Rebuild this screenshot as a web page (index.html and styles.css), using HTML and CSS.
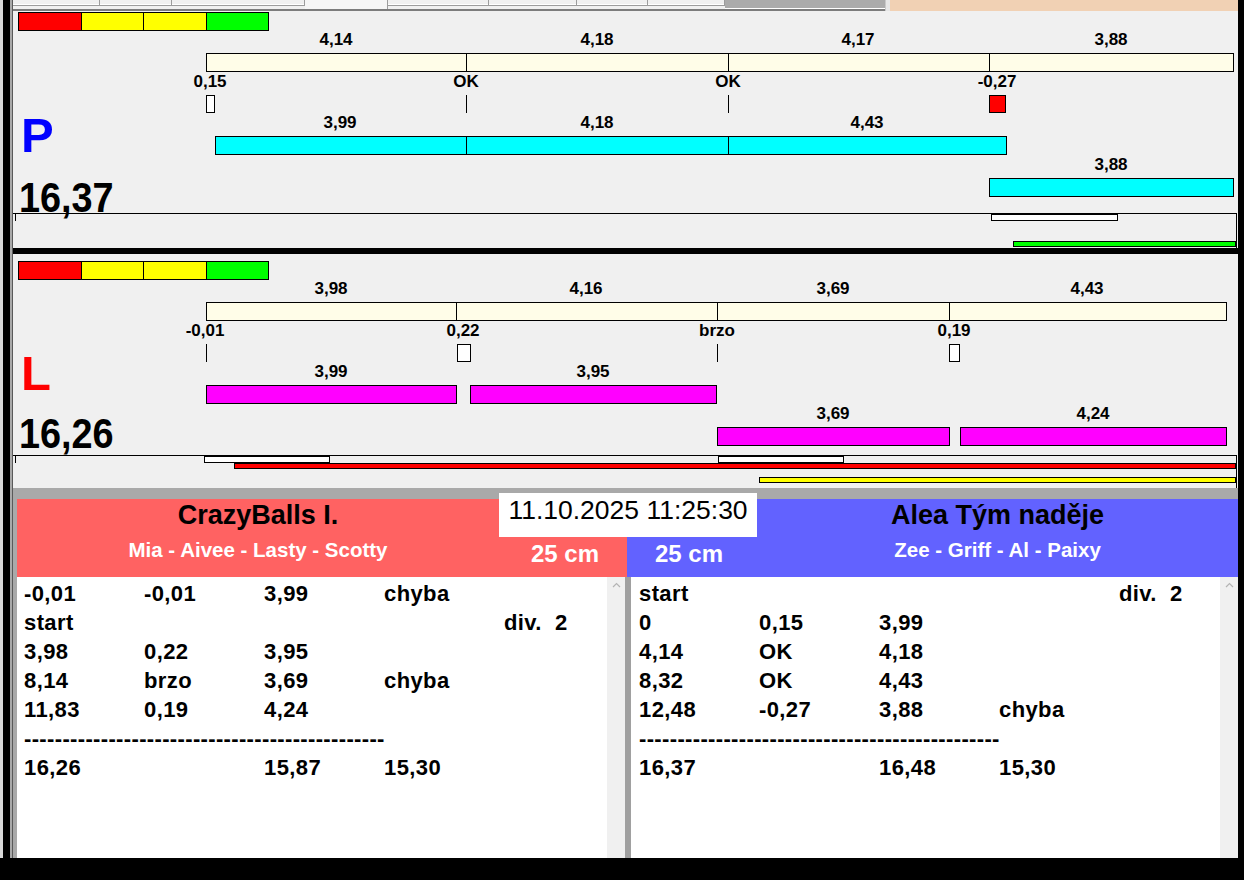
FILE: index.html
```html
<!DOCTYPE html>
<html lang="cs">
<head>
<meta charset="utf-8">
<title>Časomíra</title>
<link rel="stylesheet" href="styles.css">
</head>
<body>
<div class="screen">
  <div class="edge"></div>
  <div class="frame">
    <div class="tabbar">
      <div class="tabs">
        <span class="tab t1"></span><span class="tab t2"></span><span class="tab t3"></span><span class="tab t4 active"></span><span class="tab t5"></span><span class="tab t6"></span><span class="tab t7"></span><span class="tab t8"></span>
        <span class="tab-dark"></span>
      </div>
      <div class="tab-gap"></div>
      <div class="tab-peach"></div>
    </div>

    <section class="panel panel-p">
      <div class="side">
        <div class="scale"><span class="sc sc-red"></span><span class="sc sc-yellow"></span><span class="sc sc-yellow"></span><span class="sc sc-green"></span></div>
        <div class="letter letter-p">P</div>
        <div class="total">16,37</div>
      </div>
      <div class="chart">
        <div class="lane lane-lab">
          <span class="lbl" style="left:130px">4,14</span>
          <span class="lbl" style="left:391px">4,18</span>
          <span class="lbl" style="left:652px">4,17</span>
          <span class="lbl" style="left:905px">3,88</span>
        </div>
        <div class="lane lane-bar">
          <span class="seg plan" style="left:0;width:261px"></span>
          <span class="seg plan" style="left:260px;width:263px"></span>
          <span class="seg plan" style="left:522px;width:262px"></span>
          <span class="seg plan" style="left:783px;width:245px"></span>
        </div>
        <div class="lane lane-lab">
          <span class="lbl" style="left:4px">0,15</span>
          <span class="lbl" style="left:260px">OK</span>
          <span class="lbl" style="left:522px">OK</span>
          <span class="lbl" style="left:791px">-0,27</span>
        </div>
        <div class="lane lane-mark">
          <span class="mk" style="left:0;width:9px"></span>
          <span class="tick" style="left:260px"></span>
          <span class="tick" style="left:522px"></span>
          <span class="mk mk-err" style="left:783px;width:17px"></span>
        </div>
        <div class="lane lane-lab">
          <span class="lbl" style="left:134px">3,99</span>
          <span class="lbl" style="left:391px">4,18</span>
          <span class="lbl" style="left:661px">4,43</span>
        </div>
        <div class="lane lane-bar">
          <span class="seg run-p" style="left:9px;width:252px"></span>
          <span class="seg run-p" style="left:260px;width:263px"></span>
          <span class="seg run-p" style="left:522px;width:279px"></span>
        </div>
        <div class="lane lane-lab">
          <span class="lbl" style="left:905px">3,88</span>
        </div>
        <div class="lane lane-bar">
          <span class="seg run-p" style="left:783px;width:245px"></span>
        </div>
      </div>
      <div class="box">
        <span class="box-tick"></span>
        <span class="pbar pbar-white" style="left:978px;width:127px"></span>
        <span class="pbar pbar-green" style="left:1000px;width:223px"></span>
      </div>
    </section>

    <div class="divider"></div>

    <section class="panel panel-l">
      <div class="side">
        <div class="scale"><span class="sc sc-red"></span><span class="sc sc-yellow"></span><span class="sc sc-yellow"></span><span class="sc sc-green"></span></div>
        <div class="letter letter-l">L</div>
        <div class="total">16,26</div>
      </div>
      <div class="chart">
        <div class="lane lane-lab">
          <span class="lbl" style="left:125px">3,98</span>
          <span class="lbl" style="left:380px">4,16</span>
          <span class="lbl" style="left:627px">3,69</span>
          <span class="lbl" style="left:881px">4,43</span>
        </div>
        <div class="lane lane-bar">
          <span class="seg plan" style="left:0;width:251px"></span>
          <span class="seg plan" style="left:250px;width:262px"></span>
          <span class="seg plan" style="left:511px;width:233px"></span>
          <span class="seg plan" style="left:743px;width:278px"></span>
        </div>
        <div class="lane lane-lab">
          <span class="lbl" style="left:-1px">-0,01</span>
          <span class="lbl" style="left:257px">0,22</span>
          <span class="lbl" style="left:511px">brzo</span>
          <span class="lbl" style="left:748px">0,19</span>
        </div>
        <div class="lane lane-mark">
          <span class="tick" style="left:0"></span>
          <span class="mk" style="left:251px;width:14px"></span>
          <span class="tick" style="left:511px"></span>
          <span class="mk" style="left:743px;width:11px"></span>
        </div>
        <div class="lane lane-lab">
          <span class="lbl" style="left:125px">3,99</span>
          <span class="lbl" style="left:387px">3,95</span>
        </div>
        <div class="lane lane-bar">
          <span class="seg run-l" style="left:0;width:251px"></span>
          <span class="seg run-l" style="left:264px;width:247px"></span>
        </div>
        <div class="lane lane-lab">
          <span class="lbl" style="left:627px">3,69</span>
          <span class="lbl" style="left:887px">4,24</span>
        </div>
        <div class="lane lane-bar">
          <span class="seg run-l" style="left:511px;width:233px"></span>
          <span class="seg run-l" style="left:754px;width:267px"></span>
        </div>
      </div>
      <div class="box">
        <span class="box-tick"></span>
        <span class="pbar pbar-white" style="left:191px;width:126px"></span>
        <span class="pbar pbar-white" style="left:705px;width:126px"></span>
        <span class="pbar pbar-red" style="left:221px;width:1002px"></span>
        <span class="pbar pbar-yellow" style="left:746px;width:477px"></span>
      </div>
    </section>

    <section class="results">
      <div class="stamp">11.10.2025 11:25:30</div>
      <div class="headers">
        <div class="team team-a">
          <div class="names">
            <div class="team-name">CrazyBalls I.</div>
            <div class="players">Mia - Aivee - Lasty - Scotty</div>
          </div>
          <div class="len">25 cm</div>
        </div>
        <div class="team team-b">
          <div class="len">25 cm</div>
          <div class="names">
            <div class="team-name">Alea Tým naděje</div>
            <div class="players">Zee - Griff - Al - Paixy</div>
          </div>
        </div>
      </div>
      <div class="lists">
        <div class="list list-a">
          <div class="row"><span>-0,01</span><span>-0,01</span><span>3,99</span><span>chyba</span><span></span></div>
          <div class="row"><span>start</span><span></span><span></span><span></span><span>div.  2</span></div>
          <div class="row"><span>3,98</span><span>0,22</span><span>3,95</span><span></span><span></span></div>
          <div class="row"><span>8,14</span><span>brzo</span><span>3,69</span><span>chyba</span><span></span></div>
          <div class="row"><span>11,83</span><span>0,19</span><span>4,24</span><span></span><span></span></div>
          <div class="row"><span class="dash">-----------------------------------------------</span></div>
          <div class="row"><span>16,26</span><span></span><span>15,87</span><span>15,30</span><span></span></div>
        </div>
        <div class="scroll"><svg class="chev" width="9" height="6" viewBox="0 0 9 6"><polyline points="1,5 4.5,1.5 8,5" fill="none" stroke="#b4b4b4" stroke-width="1.2"/></svg></div>
        <div class="list-sep"></div>
        <div class="list list-b">
          <div class="row"><span>start</span><span></span><span></span><span></span><span>div.  2</span></div>
          <div class="row"><span>0</span><span>0,15</span><span>3,99</span><span></span><span></span></div>
          <div class="row"><span>4,14</span><span>OK</span><span>4,18</span><span></span><span></span></div>
          <div class="row"><span>8,32</span><span>OK</span><span>4,43</span><span></span><span></span></div>
          <div class="row"><span>12,48</span><span>-0,27</span><span>3,88</span><span>chyba</span><span></span></div>
          <div class="row"><span class="dash">-----------------------------------------------</span></div>
          <div class="row"><span>16,37</span><span></span><span>16,48</span><span>15,30</span><span></span></div>
        </div>
        <div class="scroll"><svg class="chev" width="9" height="6" viewBox="0 0 9 6"><polyline points="1,5 4.5,1.5 8,5" fill="none" stroke="#b4b4b4" stroke-width="1.2"/></svg></div>
      </div>
    </section>
  </div>
</div>
</body>
</html>
```
FILE: styles.css
```css
* { box-sizing: border-box; }
html, body { margin: 0; padding: 0; }
body {
  background: #000;
  width: 1244px;
  height: 880px;
  overflow: hidden;
  font-family: "Liberation Sans", Arial, sans-serif;
  color: #000;
}
.screen { display: flex; width: 1244px; height: 880px; background: #000; }
.edge {
  flex: none; width: 13px; height: 858px;
  background: linear-gradient(to right, #d9d9d9 0 3px, #000 3px 10px, #a9a9a9 10px 12px, #5a5a5a 12px 13px);
}
.frame {
  flex: none; width: 1225px; height: 858px;
  background: #f0f0f0;
  display: flex; flex-direction: column;
}

/* tab strip */
.tabbar { flex: none; display: flex; height: 11px; }
.tabs { display: flex; width: 872px; height: 11px; border-bottom: 2px solid #7c7c7c; background: #f0f0f0; }
.tab { flex: none; height: 6px; border-right: 1px solid #9c9c9c; border-bottom: 1px solid #9c9c9c; box-shadow: inset 0 -1px 0 #fff; }
.tab.active { height: 9px; border-bottom: none; box-shadow: none; background: #f6f6f6; }
.t1 { width: 87px; } .t2 { width: 72px; } .t3 { width: 133px; } .t4 { width: 83px; }
.t5 { width: 101px; } .t6 { width: 88px; } .t7 { width: 71px; } .t8 { width: 77px; }
.tab-dark { flex: 1; height: 9px; background: #ababab; border-bottom: 1px solid #fff; }
.tab-gap { width: 5px; height: 11px; background: #e6e6e6; border-left: 1px solid #c8c8c8; }
.tab-peach { flex: 1; height: 11px; background: #f1d1b4; }

/* graph panels */
.panel {
  flex: none;
  display: grid;
  grid-template-columns: 193px 1032px;
  grid-template-rows: 202px 35px;
}
.panel-l { grid-template-rows: 201px 33px; }
.side {
  grid-column: 1; grid-row: 1;
  display: flex; flex-direction: column; align-items: flex-start;
  padding-left: 5px;
  position: relative; z-index: 1;
}
.scale { display: flex; width: 251px; height: 19px; border: 1px solid #000; flex: none; }
.panel-p .scale { margin-top: 1px; }
.panel-l .scale { margin-top: 7px; }
.sc { height: 17px; }
.sc + .sc { border-left: 1px solid #000; }
.sc-red { width: 62px; background: #ff0000; }
.sc-yellow { width: 62px; background: #ffff00; }
.sc-yellow + .sc-yellow { width: 63px; }
.sc-green { width: 62px; background: #00ff00; }
.letter { font-size: 49px; line-height: 48px; font-weight: bold; margin-left: 3px; }
.letter-p { color: #0000ff; margin-top: 80px; }
.letter-l { color: #ff0000; margin-top: 69px; }
.total {
  font-size: 42px; line-height: 42px; font-weight: bold;
  transform: scaleX(0.9); transform-origin: left center;
  margin-left: 1px;
}
.panel-p .total { margin-top: 17.5px; }
.panel-l .total { margin-top: 15.5px; }

.chart { grid-column: 2; grid-row: 1; display: flex; flex-direction: column; padding-top: 25px; }
.panel-p .chart { padding-top: 19px; }
.lane { position: relative; flex: none; }
.lane-lab { height: 23px; }
.lane-bar { height: 19px; }
.lane-mark { height: 18px; }
.lbl {
  position: absolute; top: 1px;
  transform: translateX(-50%);
  font-size: 17px; line-height: 17px; font-weight: bold;
  white-space: nowrap;
}
.seg { position: absolute; top: 0; height: 19px; border: 1px solid #000; }
.plan { background: #fffde8; }
.run-p { background: #00ffff; }
.run-l { background: #ff00ff; }
.tick { position: absolute; top: 0; width: 1px; height: 18px; background: #000; }
.mk { position: absolute; top: 0; height: 18px; border: 1px solid #000; background: #fff; }
.mk-err { background: #ff0000; }

.box {
  grid-column: 1 / -1; grid-row: 2;
  position: relative;
  width: 1224px;
  border-top: 1px solid #000;
  border-right: 1px solid #000;
}
.box-tick { position: absolute; left: 2px; top: 0; width: 1px; height: 7px; background: #000; }
.pbar { position: absolute; border: 1px solid #000; }
.pbar-white { top: 0; height: 7px; background: #fff; }
.pbar-green { top: 27px; height: 6px; background: #00ff00; }
.pbar-red { top: 7px; height: 6px; background: #ff0000; }
.pbar-yellow { top: 21px; height: 6px; background: #ffff00; }

.divider { flex: none; height: 6px; background: #000; }

/* results */
.results {
  flex: 1;
  position: relative;
  background: #a9a9a9;
  padding: 11px 0 0 4px;
  display: flex; flex-direction: column;
}
.stamp {
  position: absolute; left: 486px; top: 5px;
  width: 258px; height: 44px;
  background: #fff;
  padding-top: 2px;
  text-align: center;
  font-size: 26.5px; line-height: 30px;
  z-index: 2;
}
.headers { display: flex; height: 78px; flex: none; }
.team { display: grid; height: 78px; }
.team-a { width: 610px; background: #ff6262; grid-template-columns: 482px 128px; }
.team-b { width: 611px; background: #6262ff; grid-template-columns: 130px 481px; }
.names { text-align: center; padding-top: 1px; }
.team-name { font-size: 27px; line-height: 30px; font-weight: bold; color: #000; white-space: nowrap; }
.players { font-size: 20.5px; line-height: 24px; font-weight: bold; color: #fff; margin-top: 8px; white-space: nowrap; }
.len { font-size: 24px; line-height: 28px; font-weight: bold; color: #fff; padding-top: 41px; white-space: nowrap; }
.team-a .len { text-align: right; padding-right: 28px; }
.team-b .len { padding-left: 28px; }

.lists { display: flex; height: 281px; flex: none; }
.list { background: #fff; padding-top: 2px; height: 281px; }
.list-a { width: 590px; padding-left: 7px; }
.list-b { width: 589px; padding-left: 8px; }
.scroll { width: 18px; height: 281px; background: #f0f0f0; display: flex; justify-content: center; padding-top: 5px; }
.chev { display: block; }
.list-sep { width: 6px; background: #a0a0a0; }
.row {
  display: grid;
  grid-template-columns: 120px 120px 120px 120px auto;
  height: 29px;
  font-size: 22px; line-height: 29px; font-weight: bold;
  letter-spacing: 0.4px;
  white-space: pre;
}
.dash { grid-column: 1 / -1; letter-spacing: 0.35px; }
```
